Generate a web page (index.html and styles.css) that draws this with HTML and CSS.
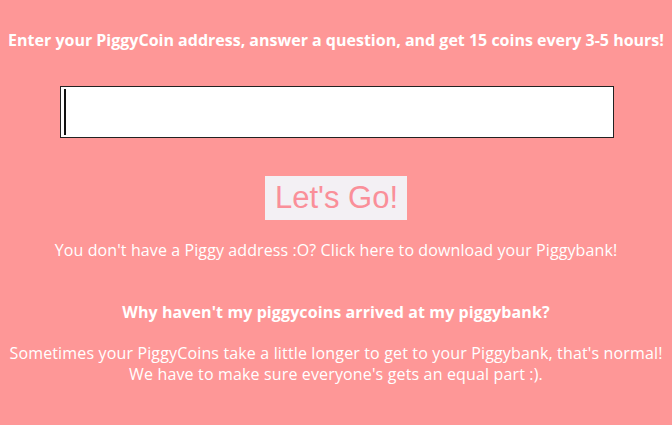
FILE: index.html
```html
<!DOCTYPE html>
<html>
<head>
<meta charset="utf-8">
<link rel="stylesheet" href="styles.css">
</head>
<body>
<div class="page">
  <h1 class="title">Enter your PiggyCoin address, answer a question, and get 15 coins every 3-5 hours!</h1>
  <div class="field"><span class="caret"></span></div>
  <div class="btn">Let's Go!</div>
  <p class="note">You don't have a Piggy address :O? Click here to download your Piggybank!</p>
  <h2 class="faq">Why haven't my piggycoins arrived at my piggybank?</h2>
  <p class="answer">Sometimes your PiggyCoins take a little longer to get to your Piggybank, that's normal!<br>We have to make sure everyone's gets an equal part :).</p>
</div>
</body>
</html>
```
FILE: styles.css
```css
html, body {
  margin: 0;
  padding: 0;
  background: #fe9797;
  width: 672px;
  height: 425px;
  overflow: hidden;
}
.page {
  display: flex;
  flex-direction: column;
  align-items: center;
  color: #ffffff;
  font-family: "Open Sans", sans-serif;
}
.title {
  margin: 30px 0 0 0;
  font-size: 16px;
  font-weight: 700;
  line-height: 20px;
  letter-spacing: 0;
  white-space: nowrap;
}
.field {
  margin: 36px 0 0 1px;
  background: #ffffff;
  border: 1px solid #222222;
  display: flex;
  padding: 2px;
  width: 548px;
  height: 46px;
}
.caret {
  width: 2px;
  height: 46px;
  margin-left: 1px;
  background: #111111;
}
.btn {
  margin-top: 38px;
  background: #f3f0f4;
  color: #fa8f99;
  font-family: "Liberation Sans", Arial, sans-serif;
  font-size: 31px;
  line-height: 44px;
  padding: 0 9px 0 10px;
}
.note {
  margin: 19px 0 0 0;
  font-size: 16px;
  line-height: 22px;
  letter-spacing: 0.1px;
  white-space: nowrap;
}
.faq {
  margin: 41px 0 0 0;
  font-size: 16px;
  font-weight: 700;
  line-height: 20px;
  letter-spacing: 0.1px;
  white-space: nowrap;
}
.answer {
  margin: 21px 0 0 0;
  font-size: 16px;
  line-height: 21px;
  text-align: center;
  letter-spacing: 0.15px;
  white-space: nowrap;
}
```
